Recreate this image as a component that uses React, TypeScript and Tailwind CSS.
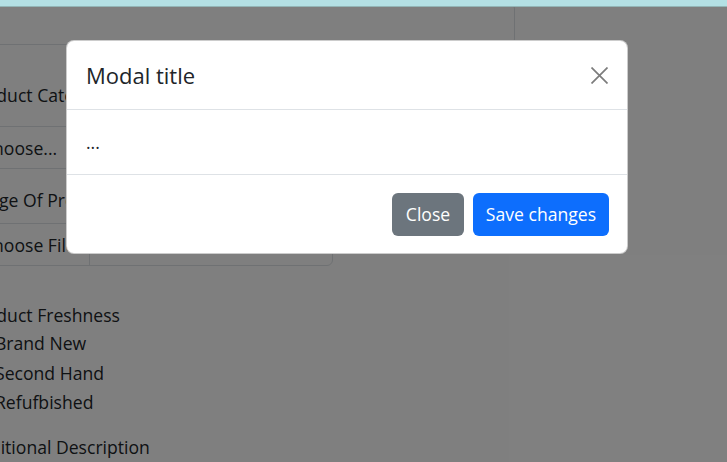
const font = { fontFamily: '"Open Sans", "Noto Sans", sans-serif' };

export default function App() {
  return (
    <div className="w-[727px] h-[462px] overflow-hidden bg-white flex flex-col text-[#212529]" style={font}>
      <div className="h-[6px] bg-[#b4e0e4]" />
      <div className="h-px bg-[#93b5b6]" />

      <div className="relative flex-1 overflow-hidden">
        {/* page behind the modal, scrolled a little to the right */}
        <form className="ml-[-32px] text-[17.6px] leading-[26px] whitespace-nowrap">
          <div className="mt-[-4px] h-[42px] w-[547px] rounded-[6px] border border-[#dee2e6]" />

          <label className="block mt-[37px]">Product Category</label>
          <div className="mt-[18px] h-[43px] w-[547px] rounded-[6px] border border-[#dee2e6] flex items-center px-[13px]">
            Choose...
          </div>

          <label className="block mt-[18px]">Image Of Product</label>
          <div className="mt-[10px] h-[43px] w-[365px] rounded-[6px] border border-[#dee2e6] flex">
            <div className="w-[121px] shrink-0 border-r border-[#dee2e6] flex items-center px-[13px]">Choose File</div>
            <div className="flex-1" />
          </div>

          <label className="block mt-[36px]">Product Freshness</label>
          <div className="mt-[2px] flex flex-col gap-[3.5px] pl-[27px]">
            <label>Brand New</label>
            <label>Second Hand</label>
            <label>Refufbished</label>
          </div>

          <label className="block mt-[19px]">Additional Description</label>
        </form>

        <div className="absolute inset-0 bg-black/50" />

        {/* modal */}
        <div className="absolute left-[66px] top-[33px] w-[562px] rounded-[8px] border border-black/20 bg-white">
          <div className="h-[69px] flex items-center justify-between pl-[19px] pr-[19px] border-b border-[#dee2e6]">
            <h5 className="text-[22px] leading-[33px] font-medium">Modal title</h5>
            <button type="button" className="w-[17px] h-[17px] flex items-center justify-center text-[#7c7c7c]">
              <svg width="17" height="17" viewBox="0 0 17 17" fill="none" stroke="currentColor" strokeWidth="1.7">
                <path d="M0.5 0.5 L16.5 16.5 M16.5 0.5 L0.5 16.5" />
              </svg>
            </button>
          </div>
          <div className="h-[64px] flex items-center px-[19px] text-[17.6px]">...</div>
          <div className="h-[79px] flex items-start justify-end gap-[9px] pr-[18px] pt-[18px] border-t border-[#dee2e6]">
            <button type="button" className="h-[43px] w-[72px] rounded-[6px] bg-[#6c757d] text-white text-[17.6px]">
              Close
            </button>
            <button type="button" className="h-[43px] w-[136px] rounded-[6px] bg-[#0d6efd] text-white text-[17.6px]">
              Save changes
            </button>
          </div>
        </div>
      </div>
    </div>
  );
}
